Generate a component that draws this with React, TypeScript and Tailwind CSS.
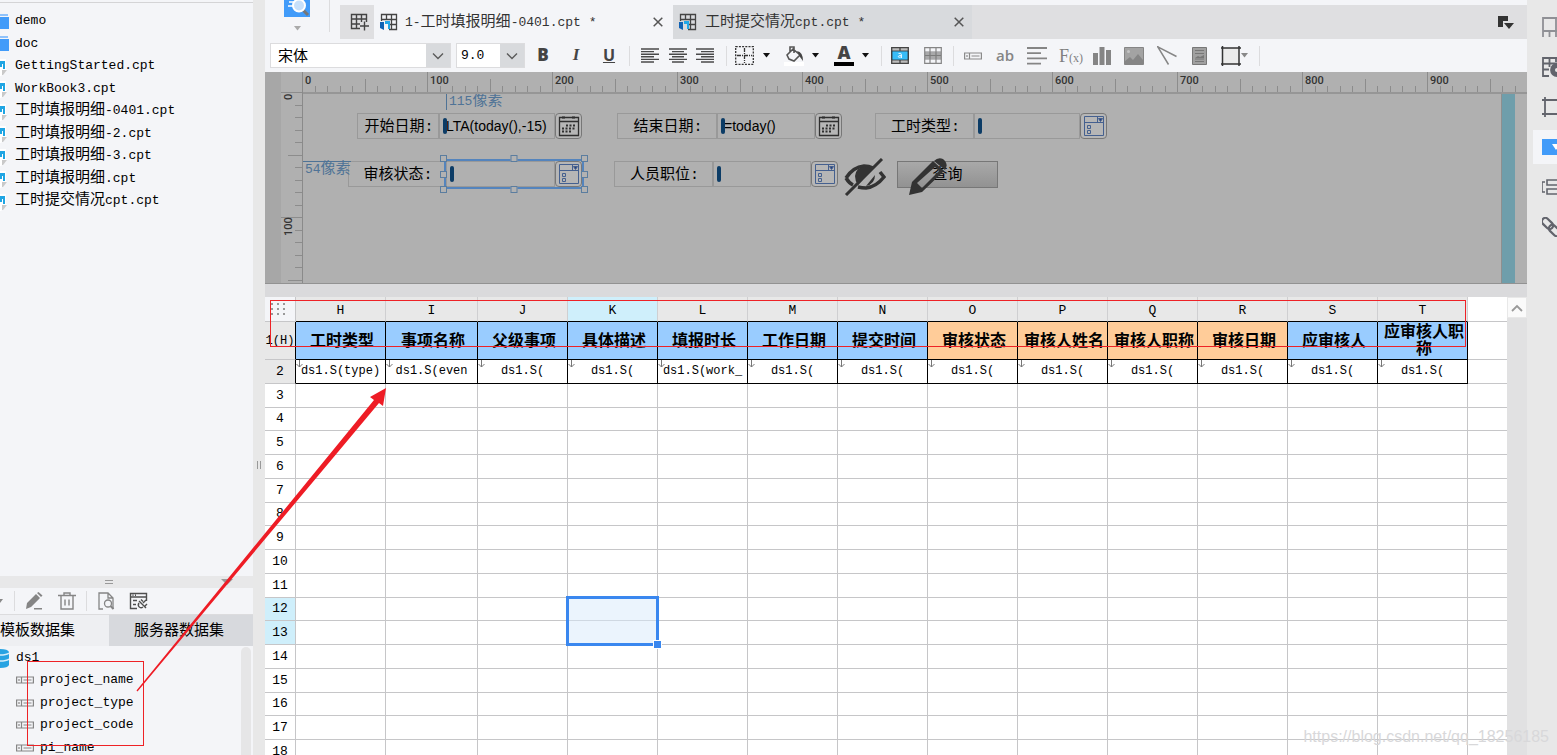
import React, { useState } from "react";

const SEP = "h-5 w-px shrink-0 bg-[#dcdcde]";

const files = [
  { name: "demo", folder: true },
  { name: "doc", folder: true },
  { name: "GettingStarted.cpt" },
  { name: "WorkBook3.cpt" },
  { name: "工时填报明细-0401.cpt" },
  { name: "工时填报明细-2.cpt" },
  { name: "工时填报明细-3.cpt" },
  { name: "工时填报明细.cpt" },
  { name: "工时提交情况cpt.cpt" },
];

const fields = ["project_name", "project_type", "project_code", "pi_name"];

const columns = [
  { id: "H", title: "工时类型", value: "ds1.S(type)" },
  { id: "I", title: "事项名称", value: "ds1.S(even" },
  { id: "J", title: "父级事项", value: "ds1.S(" },
  { id: "K", title: "具体描述", value: "ds1.S(" },
  { id: "L", title: "填报时长", value: "ds1.S(work_" },
  { id: "M", title: "工作日期", value: "ds1.S(" },
  { id: "N", title: "提交时间", value: "ds1.S(" },
  { id: "O", title: "审核状态", value: "ds1.S(", orange: true },
  { id: "P", title: "审核人姓名", value: "ds1.S(", orange: true },
  { id: "Q", title: "审核人职称", value: "ds1.S(", orange: true },
  { id: "R", title: "审核日期", value: "ds1.S(", orange: true },
  { id: "S", title: "应审核人", value: "ds1.S(" },
  { id: "T", title: "应审核人职称", value: "ds1.S(" },
];

const emptyRows = Array.from({ length: 16 }, (_, i) => i + 3);

// Chinese runs are set larger than the latin ones
function Mixed({ text }: { text: string }) {
  return (
    <span className="whitespace-pre">
      {text.split(/([\u4e00-\u9fff]+)/).map((part, i) => (
        <span key={i} className={i % 2 ? "text-[15px]" : "text-[13px]"}>
          {part}
        </span>
      ))}
    </span>
  );
}

function FolderIcon() {
  return (
    <svg width="9" height="16" viewBox="0 0 9 16">
      <path d="M0 0h8v2H0z" fill="#8fc2fb" />
      <path d="M0 3h9v12H0z" fill="#419bf9" />
    </svg>
  );
}

function FileIcon() {
  return (
    <svg width="8" height="18" viewBox="0 0 8 18">
      <path d="M0 1h6v10l1 1-6 6H0z" fill="#fff" />
      <path d="M0 3h5v8H3V6H2v3H0z" fill="#1fa5e3" />
      <path d="M2 12h5l-4 5H2z" fill="#c9c9c9" />
    </svg>
  );
}

function FieldIcon({ color = "#858585" }: { color?: string }) {
  return (
    <svg width="18" height="8" viewBox="0 0 18 8" fill="none" stroke={color} strokeWidth="1.2">
      <path d="M.6 1h16.800v6H.6zM5.500 1v6M3 3v2M7.500 4h8" />
    </svg>
  );
}

function Caret({ color = "#111" }: { color?: string }) {
  return (
    <svg width="7" height="5" viewBox="0 0 7 5" fill={color}>
      <path d="M0 0h7L3.500 4.500z" />
    </svg>
  );
}

function Chevron() {
  return (
    <svg width="12" height="8" viewBox="0 0 12 8" fill="none" stroke="#5a5a5a" strokeWidth="1.4">
      <path d="M1 1.500l5 5 5-5" />
    </svg>
  );
}

function SheetIcon() {
  return (
    <svg width="18" height="18" viewBox="0 0 18 18" fill="none">
      <path d="M1.500 8V1.500h15v15H9M1.500 6.500h15M6.500 1.500v5M11.500 1.500v15M9 11.500h7.500" stroke="#444" strokeWidth="1.300" />
      <path d="M0 9h4v8l-4-2z" fill="#0f62b5" />
      <path d="M5 8h5v8H8v-5H5z" fill="#22a7e8" />
    </svg>
  );
}

function AlignIcon({ d }: { d: string }) {
  return (
    <svg width="18" height="15" viewBox="0 0 18 15" fill="none" stroke="#4a4a4a" strokeWidth="1.4">
      <path d={d} />
    </svg>
  );
}

function CloseIcon() {
  return (
    <svg width="10" height="10" viewBox="0 0 10 10" stroke="#555" strokeWidth="1.500">
      <path d="M.7.7l8.600 8.600M9.300.7L.7 9.300" />
    </svg>
  );
}

function CalendarIcon() {
  return (
    <svg width="22" height="22" viewBox="0 0 22 22" fill="none" stroke="#2f2f2f">
      <path d="M1.500 2.500h19v18h-19zM1.500 6.500h19" strokeWidth="1.300" />
      <path d="M4 2.500h3M14 2.500h3" strokeWidth="2" />
      <path d="M8 10.500h10M4 13.500h14M4 16.500h10" strokeWidth="2" strokeDasharray="2 1.500" />
    </svg>
  );
}

function ComboIcon() {
  return (
    <svg width="22" height="22" viewBox="0 0 22 22" fill="none" stroke="#45608f">
      <path d="M1.500 1.500h19v19h-19zM1.500 7.500h19M14.500 1.500v6M4.500 10.500h3v3h-3zM4.500 15.500h3v3h-3z" />
      <path d="M15.500 3.500h4l-2 3z" fill="#27417c" />
    </svg>
  );
}

type WidgetProps = {
  id: string;
  label: string;
  labelClass: string;
  fieldClass: string;
  value?: string;
  date?: boolean;
  selected?: boolean;
};

const handles = [
  "-left-[6px] -top-[6px]",
  "left-1/2 -translate-x-1/2 -top-[6px]",
  "-right-[6px] -top-[6px]",
  "-left-[6px] top-[10px]",
  "-right-[6px] top-[10px]",
  "-left-[6px] -bottom-[6px]",
  "left-1/2 -translate-x-1/2 -bottom-[6px]",
  "-right-[6px] -bottom-[6px]",
];

function Widget({ id, label, labelClass, fieldClass, value = "", date, selected }: WidgetProps) {
  return (
    <div className="flex h-[26px] shrink-0">
      <label
        htmlFor={id}
        className={`flex items-center justify-center whitespace-nowrap border border-[#999] pl-[2px] pt-1 text-[15px] ${labelClass}`}
      >
        {label}
      </label>
      <div className={`relative flex ${selected ? "outline-2 outline-[#5484bd]" : ""}`}>
        <input
          id={id}
          readOnly
          value={value}
          className={`border border-[#999] bg-transparent pb-px pl-[6px] font-['Liberation_Sans',sans-serif] text-sm outline-none ${fieldClass}`}
        />
        <span className="absolute left-1 top-[5px] h-4 w-1 rounded-sm bg-[#0c3c66]" />
        <button
          type="button"
          aria-label={date ? "选择日期" : "展开选项"}
          className="flex w-[27px] items-center justify-center rounded border border-[#777] bg-[#b6b6b6]"
        >
          {date ? <CalendarIcon /> : <ComboIcon />}
        </button>
        {selected &&
          handles.map((pos) => (
            <span key={pos} className={`absolute h-[7px] w-[7px] border border-[#5b7d9f] bg-[#b2b2b2] ${pos}`} />
          ))}
      </div>
    </div>
  );
}

function Sidebar() {
  const [tab, setTab] = useState("template");

  return (
    <aside className="flex w-[253px] shrink-0 flex-col bg-[#f4f5f8]">
      <div className="h-[3px] shrink-0 border-b border-[#d4d4d6]" />
      <ul className="min-h-0 flex-1 overflow-hidden pt-[7px]">
        {files.map((f) => (
          <li key={f.name} className="flex items-center odd:h-[23px] even:h-[22px]">
            <span className="w-[15px] shrink-0">{f.folder ? <FolderIcon /> : <FileIcon />}</span>
            <Mixed text={f.name} />
          </li>
        ))}
      </ul>

      <div className="flex h-3 shrink-0 items-center bg-[#e8e8e9]">
        <span className="ml-[105px] h-1 w-2 border-y border-[#999]" />
        <span className="ml-[108px]">
          <svg width="12" height="6" viewBox="0 0 12 6" fill="#999">
            <path d="M0 0h12L6 6z" />
          </svg>
        </span>
      </div>

      <div className="flex h-[26px] shrink-0 items-center">
        <span className="w-[14px] shrink-0 overflow-hidden">
          <svg width="3" height="5" viewBox="0 0 3 5" fill="#888">
            <path d="M0 0h3L0 4z" />
          </svg>
        </span>
        <span className={SEP} />
        <button type="button" aria-label="编辑" className="ml-[10px]">
          <svg width="18" height="18" viewBox="0 0 18 18" fill="#858585">
            <path d="M1 17l1-6L11 2l4 4-9 9zM12 1l1.500-1 4 3.500L16 5z" />
            <path d="M9 16h8v1.500H9z" />
          </svg>
        </button>
        <button type="button" aria-label="删除" className="ml-[15px]">
          <svg width="18" height="18" viewBox="0 0 18 18" fill="none" stroke="#858585" strokeWidth="1.400">
            <path d="M0 3.500h18M6 3V1h6v2M3 4v13h12V4M7 7.500v6M11 7.500v6" />
          </svg>
        </button>
        <span className={`ml-[10px] ${SEP}`} />
        <button type="button" aria-label="预览" className="ml-[11px]">
          <svg width="17" height="18" viewBox="0 0 17 18" fill="none" stroke="#858585" strokeWidth="1.300">
            <path d="M5 17H1V1h9l5 5v11M10 1v5h5" />
            <circle cx="10" cy="11.500" r="3.500" />
            <path d="M12.500 14l3 3" strokeWidth="2" />
          </svg>
        </button>
        <button type="button" aria-label="连接管理" className="ml-[14px]">
          <svg width="19" height="18" viewBox="0 0 19 18" fill="none" stroke="#4f4f4f" strokeWidth="1.400">
            <path d="M8 16.500H1.500v-15h16V9M1.500 5h16M3.500 3.200h1M6 3.200h1M4 8.500h4M4 12.500h3" />
            <path d="M10 9l7 7M10 11c-2 3 1 6 4 4M12 7.500l2 2M17 8l-3 3M18 12l-2 2" />
          </svg>
        </button>
      </div>

      <div role="tablist" className="flex h-8 shrink-0 border-t border-[#dcdcde] text-[15px]">
        <button
          type="button"
          role="tab"
          aria-selected={tab === "template"}
          onClick={() => setTab("template")}
          className="w-[109px] whitespace-nowrap bg-[#eeeff2] pt-[3px] text-left"
        >
          模板数据集
        </button>
        <button
          type="button"
          role="tab"
          aria-selected={tab === "server"}
          onClick={() => setTab("server")}
          className="flex-1 bg-[#d7d9dd] pr-1 pt-[3px]"
        >
          服务器数据集
        </button>
      </div>

      <div className="flex h-[109px] shrink-0 overflow-hidden">
        <ul className="flex-1 text-[13px]">
          <li className="flex h-[23px] items-center">
            <span className="w-4 shrink-0">
              <svg width="9" height="20" viewBox="0 0 9 20">
                <path d="M0 1q8 0 9 3v13q-1 3-9 3z" fill="#27a3e2" />
                <path d="M0 7q7 0 9-2M0 13q7 0 9-2" fill="none" stroke="#d6eefa" strokeWidth="1.500" />
              </svg>
            </span>
            ds1
          </li>
          {fields.map((f) => (
            <li key={f} className="flex items-center pl-4 odd:h-[23px] even:h-[22px]">
              <span className="w-6 shrink-0">
                <FieldIcon />
              </span>
              {f}
            </li>
          ))}
        </ul>
        <div className="mt-px w-[10px] rounded-t-md bg-[#e6e6e7]" />
        <div className="w-0.5" />
      </div>
    </aside>
  );
}

function FileTabs() {
  return (
    <div className="flex h-[39px] shrink-0 bg-[#f4f5f8]">
      <button type="button" aria-label="数据预览" className="flex w-16 flex-col items-center gap-[9px]">
        <svg width="26" height="17" viewBox="0 0 26 17">
          <path d="M0 0h26v17H0z" fill="#419bf9" />
          <path d="M5 2h6M4 6h5" stroke="#fff" strokeWidth="1.500" />
          <path d="M19 10l5 5" stroke="#777" strokeWidth="3" />
          <circle cx="15" cy="5.500" r="6" fill="#c8e0fa" stroke="#fff" strokeWidth="2" />
        </svg>
        <Caret color="#aaa" />
      </button>
      <span className="mb-[7px] w-px bg-[#dcdcde]" />
      <div className="ml-[10px] mt-[5px] flex h-[34px] flex-1 bg-[#dfdfe1]">
        <button type="button" aria-label="新建" className="flex w-[34px] items-center justify-center pl-1">
          <svg width="19" height="18" viewBox="0 0 19 18" fill="none" stroke="#444" strokeWidth="1.400">
            <path d="M10 15.500H1.500v-14h15V9M1.500 6h15M1.500 11H10M6.500 1.500v14M11.500 1.500V9M10 13h9M14.500 8.500v9" />
          </svg>
        </button>
        <div className="flex w-[299px] items-center bg-[#f4f5f8] pl-[6px] pr-[10px] text-[#333]">
          <SheetIcon />
          <span className="ml-[7px] flex-1 pt-[3px]">
            <Mixed text="1-工时填报明细-0401.cpt *" />
          </span>
          <button type="button" aria-label="关闭 1-工时填报明细-0401.cpt">
            <CloseIcon />
          </button>
        </div>
        <div className="flex w-[299px] items-center bg-[#d8dadd] pl-[6px] pr-2 text-[#333]">
          <SheetIcon />
          <span className="ml-[8px] flex-1 pt-[3px]">
            <Mixed text="工时提交情况cpt.cpt *" />
          </span>
          <button type="button" aria-label="关闭 工时提交情况cpt.cpt">
            <CloseIcon />
          </button>
        </div>
        <button type="button" aria-label="窗口列表" className="ml-auto mr-[13px]">
          <svg width="16" height="13" viewBox="0 0 16 13" fill="#333">
            <path d="M0 0h10v5H5v6H0zM6 7h10l-5 6z" />
          </svg>
        </button>
      </div>
    </div>
  );
}

function Toolbar() {
  return (
    <div className="flex h-[33px] shrink-0 items-center overflow-hidden bg-[#f4f5f8] pl-[5px] text-[#444]">
      <div className="flex h-[25px] w-[181px] border border-[#dcdcde] bg-white">
        <select aria-label="字体" className="flex-1 appearance-none pl-[7px] pt-[3px] text-[15px] text-black outline-none">
          <option>宋体</option>
        </select>
        <span className="flex w-6 items-center justify-center bg-[#d8dadd]">
          <Chevron />
        </span>
      </div>
      <div className="ml-[5px] flex h-[25px] w-[69px] border border-[#dcdcde] bg-white">
        <select aria-label="字号" className="w-0 flex-1 appearance-none pl-1 text-[13px] text-black outline-none">
          <option>9.0</option>
        </select>
        <span className="flex w-6 items-center justify-center bg-[#d8dadd]">
          <Chevron />
        </span>
      </div>
      <button type="button" className="ml-[10px] w-4 pb-[2px] font-['Open_Sans',sans-serif] text-[17px] font-extrabold">
        B
      </button>
      <button type="button" className="ml-[17px] w-4 pb-[2px] font-['Liberation_Serif',serif] text-[17px] font-bold italic">
        I
      </button>
      <button type="button" className="ml-[17px] w-4 pb-[2px] font-['Open_Sans',sans-serif] text-base font-bold underline">
        U
      </button>
      <span className={`ml-3 ${SEP}`} />
      <button type="button" aria-label="左对齐" className="ml-[11px]">
        <AlignIcon d="M0 1h18M0 3.600h13M0 6.200h18M0 8.800h13M0 11.400h18M0 14h13" />
      </button>
      <button type="button" aria-label="居中" className="ml-[10px]">
        <AlignIcon d="M0 1h18M3 3.600h12M0 6.200h18M3 8.800h12M0 11.400h18M3 14h12" />
      </button>
      <button type="button" aria-label="右对齐" className="ml-[9px]">
        <AlignIcon d="M0 1h18M5 3.600h13M0 6.200h18M5 8.800h13M0 11.400h18M5 14h13" />
      </button>
      <span className={`ml-3 ${SEP}`} />
      <button type="button" aria-label="边框" className="ml-2 flex items-center gap-[9px]">
        <svg width="19" height="19" viewBox="0 0 19 19" fill="none" stroke="#333" strokeWidth="1.300">
          <path d="M.7.7h17.600v17.600H.7z" strokeDasharray="2 1.200" />
          <path d="M9.500 2v15M2 9.500h15" strokeDasharray="4 1 1 1" />
        </svg>
        <Caret />
      </button>
      <button type="button" aria-label="填充颜色" className="ml-[14px] flex items-center gap-[8px]">
        <svg width="20" height="20" viewBox="0 0 20 20" fill="none" stroke="#555" strokeWidth="1.600">
          <path d="M3 9l6-6 7 6-6 6-5-2zM6 6V1h4v6" />
          <path d="M13 5q6 1 6 10l-3-4z" fill="#444" stroke="none" />
          <path d="M0 16h20v4H0z" fill="#fff" stroke="none" />
        </svg>
        <Caret />
      </button>
      <button type="button" aria-label="字体颜色" className="ml-[15px] flex items-center gap-2">
        <span className="flex h-5 w-5 items-center justify-center border-b-4 border-black pb-1 font-['Open_Sans',sans-serif] text-lg font-extrabold">
          A
        </span>
        <Caret />
      </button>
      <span className={`ml-3 ${SEP}`} />
      <button type="button" aria-label="合并单元格" className="ml-[9px]">
        <svg width="18" height="17" viewBox="0 0 18 17" fill="none" stroke="#444" strokeWidth="1.300">
          <path d="M.7.7h16.600v15.600H.7zM9 .7v3M9 13v3" fill="#bcbcbc" />
          <path d="M1 4h16v9H1z" fill="#38bdf8" stroke="#333" strokeWidth=".8" />
          <path d="M7.500 6.500q3-1 3 1.500v3M10.500 8.500q-3.500-.2-3.300 1.200.5 1.500 3.300 0" stroke="#e5f6ff" strokeWidth="1" />
        </svg>
      </button>
      <button type="button" aria-label="取消合并" className="ml-[15px]">
        <svg width="18" height="17" viewBox="0 0 18 17" fill="none" stroke="#858585" strokeWidth="1.200">
          <path d="M.7.7h16.600v15.600H.7zM1 5h16M1 12h16M6 1v15M12 1v15M1 8.500h16" />
          <path d="M1 5.500h16v6H1z" fill="#777" fillOpacity=".6" stroke="none" />
        </svg>
      </button>
      <span className={`ml-[11px] ${SEP}`} />
      <button type="button" aria-label="数据列" className="ml-[10px]">
        <FieldIcon color="#8a8a8a" />
      </button>
      <button type="button" className="ml-[13px] w-5 font-['Open_Sans',sans-serif] text-[15px] font-semibold text-[#858585]">
        ab
      </button>
      <button type="button" aria-label="富文本" className="ml-3">
        <svg width="20" height="18" viewBox="0 0 20 18" stroke="#858585" strokeWidth="1.800">
          <path d="M0 1h20M0 6.200h14M0 11.400h20M0 16.600h14" />
        </svg>
      </button>
      <button type="button" className="ml-3 w-[22px] whitespace-nowrap font-['Liberation_Serif',serif] text-lg text-[#808080]">
        F<span className="text-xs">(x)</span>
      </button>
      <button type="button" aria-label="图表" className="ml-3">
        <svg width="18" height="18" viewBox="0 0 18 18" fill="#858585">
          <path d="M0 6h5v12H0zM6.500 0h5v18h-5zM13 3h5v15h-5z" />
        </svg>
      </button>
      <button type="button" aria-label="图片" className="ml-[13px]">
        <svg width="20" height="18" viewBox="0 0 20 18">
          <path d="M.5.5h19v17H.5z" fill="#a3a3a3" stroke="#858585" />
          <path d="M1 14l5-4 3 3 5-6 5 6v4H1z" fill="#858585" />
          <circle cx="4.500" cy="4.500" r="1.500" fill="#c4c4c4" />
        </svg>
      </button>
      <button type="button" aria-label="斜线" className="ml-[13px]">
        <svg width="20" height="19" viewBox="0 0 20 19" stroke="#858585" strokeWidth="1.500">
          <path d="M0 .5l19.500 10M.5.5l11 18" />
        </svg>
      </button>
      <button type="button" aria-label="子报表" className="ml-[15px]">
        <svg width="15" height="18" viewBox="0 0 15 18" fill="none" stroke="#777">
          <path d="M.5.500h14v17H.5z" fill="#a0a0a0" />
          <path d="M3 3.500h9M3 6.500h9M3 12h9M3 14.500h9" />
          <path d="M3 11l3-2 2 1 4-2v3z" fill="#777" stroke="none" />
        </svg>
      </button>
      <button type="button" aria-label="悬浮元素" className="ml-[14px] flex items-center">
        <svg width="20" height="20" viewBox="0 0 20 20" stroke="#333" strokeWidth="1.500">
          <path d="M2 2h16v16H2z" fill="#ebebeb" stroke="none" />
          <path d="M0 2h20M0 18h20M1.500 0v20M18 0v20" />
        </svg>
        <Caret color="#888" />
      </button>
      <span className={`ml-[11px] ${SEP}`} />
    </div>
  );
}

function RulerX() {
  return (
    <svg className="h-full w-full" stroke="#8c8c8c">
      {Array.from({ length: 98 }, (_, i) => {
        const x = Math.round(i * 12.5) - 0.5;
        const top = i % 10 === 0 ? 0 : i % 5 === 0 ? 7 : 14;
        return <path key={i} d={`M${x} ${top}V20`} />;
      })}
      {Array.from({ length: 10 }, (_, i) => (
        <text key={i} x={i * 125 + 2} y="12" fontSize="11" fontWeight="500" fontFamily="Roboto, sans-serif" fill="#333" stroke="none">
          {i * 100}
        </text>
      ))}
    </svg>
  );
}

function RulerY() {
  return (
    <svg className="h-full w-full" stroke="#8c8c8c">
      {Array.from({ length: 16 }, (_, i) => {
        const y = Math.round(i * 12.5) + 0.5;
        const left = i % 10 === 0 ? 0 : i % 5 === 0 ? 7 : 14;
        return <path key={i} d={`M${left} ${y}H21`} />;
      })}
      <text transform="translate(11 8) rotate(-90)" fontSize="11" fontWeight="500" fontFamily="Roboto, sans-serif" fill="#333" stroke="none">
        0
      </text>
      <text transform="translate(11 144) rotate(-90)" fontSize="11" fontWeight="500" fontFamily="Roboto, sans-serif" fill="#333" stroke="none">
        100
      </text>
    </svg>
  );
}

function ParamPanel() {
  return (
    <section className="flex h-[212px] shrink-0 border-b border-[#929292] bg-[#b0b0b0]">
      <div className="w-4 shrink-0 bg-[#a7a7a7]" />
      <div className="w-[21px] shrink-0 pt-5">
        <RulerY />
      </div>
      <div className="flex min-w-0 flex-1 flex-col border-l border-[#8a8a8a]">
        <div className="h-5 shrink-0">
          <RulerX />
        </div>
        <div className="flex flex-1 border-t-2 border-[#969696]">
          <div className="relative flex-1 overflow-hidden border-r border-[#8f8f8f] pt-[19px]">
            <div className="flex items-start pl-[54px]">
              <Widget id="start" label="开始日期:" labelClass="w-[82px]" fieldClass="w-[116px]" value="LTA(today(),-15)" date />
              <div className="w-[35px]" />
              <Widget id="end" label="结束日期:" labelClass="w-[100px]" fieldClass="w-[98px]" value="=today()" date />
              <div className="w-[33px]" />
              <Widget id="type" label="工时类型:" labelClass="w-[99px]" fieldClass="w-[106px]" />
            </div>
            <div className="mt-[22px] flex items-start pl-[45px]">
              <Widget id="status" label="审核状态:" labelClass="w-[98px]" fieldClass="w-[109px]" selected />
              <div className="w-[32px]" />
              <Widget id="post" label="人员职位:" labelClass="w-[99px]" fieldClass="w-[98px]" />
              <svg className="ml-[6px] -mt-[3px] shrink-0" width="42" height="38" viewBox="0 0 42 38" fill="none" stroke="#333">
                <path d="M2 20Q9 9 20 8q5 0 9 2M36 14l4 5q-8 10-18 11-4 0-8-1" strokeWidth="3.500" />
                <path d="M2 20q3 5 7 7" strokeWidth="3.500" />
                <path d="M11 18q1-9 10-9 4 0 7 2L14 27q-3-4-3-9zM31 17q0 9-9 11z" fill="#333" stroke="none" />
                <path d="M38 1L2 37" strokeWidth="3" />
              </svg>
              <button
                type="button"
                className="relative ml-[11px] h-[27px] w-[101px] border border-[#777] bg-gradient-to-b from-[#a9a9a9] to-[#929292] pt-[3px] text-[15px]"
              >
                查询
                <svg className="absolute -top-1 left-[11px]" width="38" height="38" viewBox="0 0 38 38" fill="#333">
                  <path d="M0 37l3-13L24 3l11 10-22 21zM8 25l5 5 17-17-4-4z" fillRule="evenodd" />
                  <path d="M25 3q4-4 9-2 6 5 2 11z" />
                </svg>
              </button>
            </div>
            <span className="absolute left-[143px] top-0 border-l border-[#4f7396] pl-0.5 text-[15px] leading-4 text-[#4f7396]">
              <Mixed text="115像素" />
            </span>
            <span className="absolute left-0 top-[67px] border-t border-[#4f7396] pl-0.5 text-[15px] leading-4 text-[#4f7396]">
              <Mixed text="54像素" />
            </span>
          </div>
          <div className="w-[13px] shrink-0 bg-[#6f9eab]" />
          <div className="w-3 shrink-0" />
        </div>
      </div>
    </section>
  );
}

function Sheet() {
  const th = "border-b border-r p-0 font-normal";

  return (
    <section className="flex min-h-0 flex-1 overflow-hidden bg-white">
      <table className="w-0 flex-1 table-fixed border-separate border-spacing-0 text-[13px]">
        <colgroup>
          <col className="w-[31px]" />
          {columns.map((c) => (
            <col key={c.id} className={c.id === "I" ? "w-[92px]" : "w-[90px]"} />
          ))}
          <col />
        </colgroup>
        <thead>
          <tr className="h-[25px]">
            <th className="border-b border-r border-[#c6c6c8] bg-[#f4f5f8] p-0">
              <svg className="ml-[6px]" width="14" height="14" viewBox="0 0 14 14" stroke="#999" strokeWidth="2">
                <path d="M0 2h14M0 7h14M0 12h14" strokeDasharray="2 4" />
              </svg>
            </th>
            {columns.map((c) => (
              <th
                key={c.id}
                scope="col"
                className={`border-b border-r border-b-black border-r-[#cfcfd1] p-0 pt-1 font-normal ${
                  c.id === "K" ? "bg-[#cfeffb]" : "bg-[#e8e8e8]"
                }`}
              >
                {c.id}
              </th>
            ))}
            <td className="border-b border-[#c6c6c8]" />
          </tr>
        </thead>
        <tbody>
          <tr className="h-[38px]">
            <th scope="row" className={`${th} border-b-[#c6c6c8] border-r-black bg-[#e8e8e8] text-xs`}>
              1(H)
            </th>
            {columns.map((c) => (
              <td
                key={c.id}
                className={`border-b border-r border-black p-0 pl-[3px] pt-[3px] text-center text-base font-bold leading-[17px] ${
                  c.orange ? "bg-[#ffcc99]" : "bg-[#99ccff]"
                }`}
              >
                {c.title}
              </td>
            ))}
            <td className="border-b border-[#c6c6c8]" />
          </tr>
          <tr className="h-6">
            <th scope="row" className={`${th} border-b-[#c6c6c8] border-r-black bg-[#e8e8e8]`}>
              2
            </th>
            {columns.map((c) => (
              <td
                key={c.id}
                className="relative overflow-hidden whitespace-nowrap border-b border-r border-black p-0 pb-0.5 text-center text-xs"
              >
                {c.value}
                <svg className="absolute left-0 top-0" width="8" height="8" viewBox="0 0 8 8" fill="none" stroke="#777">
                  <path d="M3.500 0v7M.5 4l3 3 3-3" />
                </svg>
              </td>
            ))}
            <td className="border-b border-[#c6c6c8]" />
          </tr>
          {emptyRows.map((n) => (
            <tr key={n} className={n % 4 === 0 ? "h-[23px]" : "h-6"}>
              <th scope="row" className={`${th} border-[#c6c6c8] ${n === 12 || n === 13 ? "bg-[#cfeffb]" : "bg-white"}`}>
                {n}
              </th>
              {columns.map((c) => (
                <td key={c.id} className="relative border-b border-r border-[#c6c6c8] p-0">
                  {n === 12 && c.id === "K" && (
                    <div className="absolute -left-[2px] -top-[2px] z-10 h-[50px] w-[93px] border-[3px] border-[#3a87ef] bg-[#d8e9fb]/50">
                      <span className="absolute -bottom-[5px] -right-[5px] h-[7px] w-[7px] bg-[#3a87ef] outline outline-white" />
                    </div>
                  )}
                </td>
              ))}
              <td className="border-b border-[#c6c6c8] p-0" />
            </tr>
          ))}
        </tbody>
      </table>
      <div className="w-5 shrink-0 bg-[#e1e1e2]">
        <button type="button" aria-label="向上滚动" className="flex h-[21px] w-5 items-center justify-center border border-[#e8e8e8] bg-[#fafafa]">
          <svg width="12" height="8" viewBox="0 0 12 8" fill="none" stroke="#999" strokeWidth="1.800">
            <path d="M1 7l5-5 5 5" />
          </svg>
        </button>
      </div>
    </section>
  );
}

const railItems = [
  {
    name: "单元格元素",
    icon: (
      <svg width="22" height="20" viewBox="0 0 22 20" fill="none" stroke="#8f9095" strokeWidth="1.800">
        <path d="M1 20V1h20v19M1 14h20M7.500 14v6M14 1v19" />
      </svg>
    ),
  },
  {
    name: "单元格属性",
    icon: (
      <svg width="22" height="20" viewBox="0 0 22 20" fill="none" stroke="#62646c" strokeWidth="1.800">
        <path d="M7 19H1V1h20v5M1 6.500h14M1 12.500h6M7.500 1v9M14 1v4" />
        <circle cx="15" cy="13" r="6" fill="#62646c" />
        <circle cx="15" cy="13" r="2" fill="#e8e8e8" stroke="none" />
      </svg>
    ),
  },
  {
    name: "悬浮元素",
    icon: (
      <svg width="22" height="20" viewBox="0 0 22 20" fill="none" stroke="#62646c" strokeWidth="1.800">
        <path d="M0 3h22M0 17h22M3 0v20M19 0v20" />
      </svg>
    ),
  },
  {
    name: "控件设置",
    active: true,
    icon: (
      <svg width="22" height="16" viewBox="0 0 22 16">
        <path d="M0 0h22v16H0z" fill="#419bf9" />
        <path d="M10 5h8l-4 6z" fill="#fff" />
      </svg>
    ),
  },
  {
    name: "条件属性",
    icon: (
      <svg width="22" height="16" viewBox="0 0 22 16" fill="none" stroke="#62646c" strokeWidth="1.600">
        <path d="M3 3H0v10h3M5 1h16v5H5zM5 10h16v5H5z" />
      </svg>
    ),
  },
  {
    name: "超级链接",
    icon: (
      <svg width="22" height="20" viewBox="0 0 22 20" fill="none" stroke="#62646c" strokeWidth="2.200">
        <rect x="-1" y="3" width="13" height="7" rx="3.500" transform="rotate(45 5.500 6.500)" />
        <rect x="6" y="10" width="13" height="7" rx="3.500" transform="rotate(45 12.500 13.500)" />
      </svg>
    ),
  },
];

function RightRail() {
  return (
    <nav className="flex w-[30px] shrink-0 flex-col gap-[6px] overflow-hidden bg-[#e8e8e8] pl-[6px] pt-[10px]">
      {railItems.map((item) => (
        <button
          key={item.name}
          type="button"
          aria-label={item.name}
          className={`flex h-[34px] w-10 shrink-0 items-center pl-[9px] ${item.active ? "bg-[#f4f5f8]" : ""}`}
        >
          {item.icon}
        </button>
      ))}
    </nav>
  );
}

export default function App() {
  return (
    <div className="relative flex h-screen overflow-hidden bg-[#f4f5f8] font-['Liberation_Mono','Noto_Sans_CJK_SC',monospace] text-[15px] text-black">
      <Sidebar />
      <div className="flex w-3 shrink-0 items-center justify-center bg-[#e8e8e8] pt-[174px]">
        <span className="h-2 w-1 border-x border-[#999]" />
      </div>
      <main className="flex min-w-0 flex-1 flex-col">
        <FileTabs />
        <Toolbar />
        <ParamPanel />
        <div className="h-[13px] shrink-0 bg-[#dadadc]" />
        <Sheet />
      </main>
      <RightRail />

      {/* annotations drawn over the workspace */}
      <div className="pointer-events-none absolute left-[270px] right-[91px] top-[300px] z-20 h-[47px] border border-[#ee2226]" />
      <div className="pointer-events-none absolute left-[27px] top-[661px] z-20 h-[85px] w-[117px] border border-[#ee2226]" />
      <svg className="pointer-events-none absolute left-0 top-0 z-20" width="400" height="700" viewBox="0 0 400 700" fill="#ee1c25">
        <path d="M136.500 690.500L374 400l-4-3 16-9-3 18-4-3L137.500 691.500z" />
      </svg>
      <span className="pointer-events-none absolute bottom-2 right-2 z-20 font-['Liberation_Sans',sans-serif] text-base leading-5 text-[#d8d8da]">
        https://blog.csdn.net/qq_18256185
      </span>
    </div>
  );
}
